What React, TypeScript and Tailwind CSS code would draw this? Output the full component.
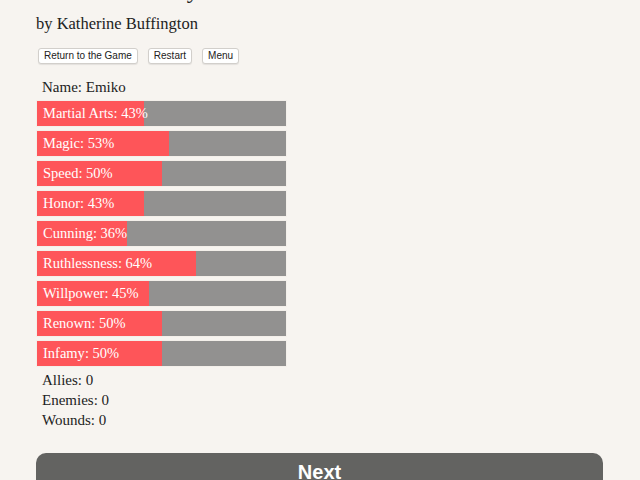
import React from "react";

const stats = [
  { label: "Martial Arts", value: 43 },
  { label: "Magic", value: 53 },
  { label: "Speed", value: 50 },
  { label: "Honor", value: 43 },
  { label: "Cunning", value: 36 },
  { label: "Ruthlessness", value: 64 },
  { label: "Willpower", value: 45 },
  { label: "Renown", value: 50 },
  { label: "Infamy", value: 50 },
];

const serif = "font-['Palatino_Linotype','Book_Antiqua','Liberation_Serif',serif]";

function StatBar({ label, value }: { label: string; value: number }) {
  return (
    <div className="relative h-[27px] w-[251px] bg-[#929190] border border-[#f3efea]">
      <div className="h-full bg-[#fe5559]" style={{ width: `${value}%` }} />
      <span className="absolute inset-0 flex items-center pl-[6px] text-[14.5px] text-white whitespace-nowrap">
        {label}: {value}%
      </span>
    </div>
  );
}

function SmallButton({ children }: { children: React.ReactNode }) {
  return (
    <button className="h-[16px] px-[5px] rounded-[3px] border border-[#d2cfcb] bg-white text-[10px] leading-none text-[#222] font-['Liberation_Sans',sans-serif] shadow-[0_1px_1px_rgba(0,0,0,0.08)]">
      {children}
    </button>
  );
}

export default function App() {
  return (
    <div className={`w-[640px] h-[480px] overflow-hidden bg-[#f7f4f0] text-[#222] ${serif}`}>
      <div className="-mt-[22px] pl-[36px] pr-[37px]">
        <h1 className="text-[24px] leading-[24px] h-[24px] pl-[6px]">Kitsune Journey</h1>
        <p className="mt-[11px] text-[16.5px] leading-[22px]">by Katherine Buffington</p>

        <div className="mt-[13px] ml-[2px] flex gap-[10px]">
          <SmallButton>Return to the Game</SmallButton>
          <SmallButton>Restart</SmallButton>
          <SmallButton>Menu</SmallButton>
        </div>

        <p className="mt-[13px] ml-[6px] text-[15px] leading-[20px]">Name: Emiko</p>

        <div className="mt-[3px] flex flex-col gap-[3px]">
          {stats.map((s) => (
            <StatBar key={s.label} label={s.label} value={s.value} />
          ))}
        </div>

        <div className="mt-[3px] ml-[6px] text-[15px] leading-[20px]">
          <p>Allies: 0</p>
          <p>Enemies: 0</p>
          <p>Wounds: 0</p>
        </div>

        <button className="mt-[23px] w-[567px] h-[44px] rounded-[10px] bg-[#636361] text-white text-[20px] font-bold font-['Liberation_Sans',sans-serif] flex items-start justify-center pt-[4px]">
          Next
        </button>
      </div>
    </div>
  );
}
